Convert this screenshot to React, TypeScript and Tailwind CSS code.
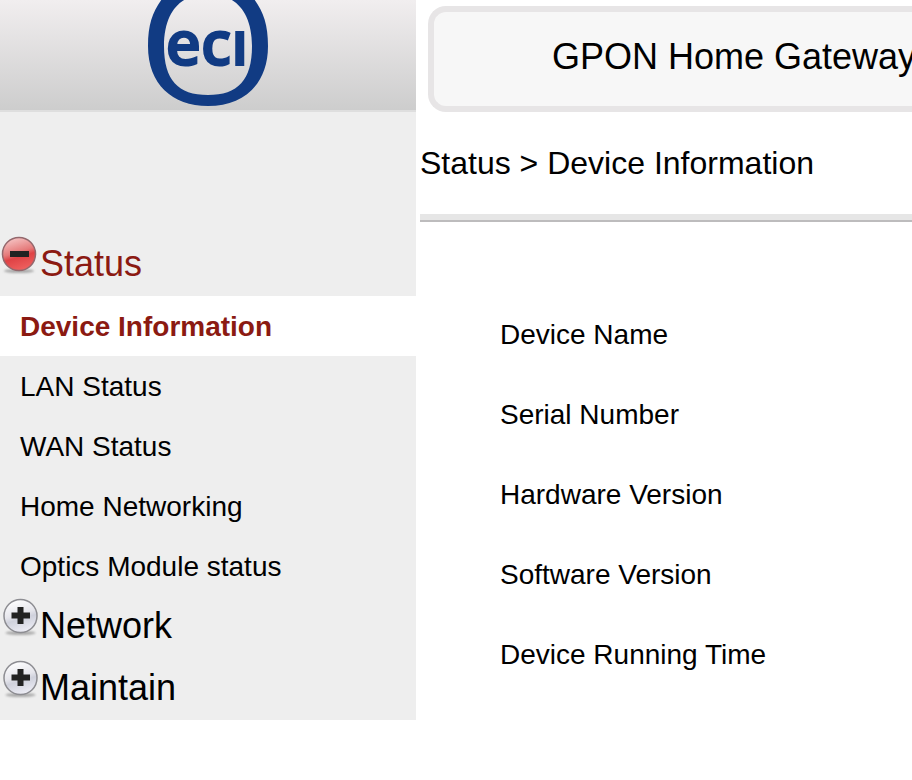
import React from "react";
import { twMerge } from "tailwind-merge";

const statusItems = [
  "Device Information",
  "LAN Status",
  "WAN Status",
  "Home Networking",
  "Optics Module status",
];

const deviceRows = [
  "Device Name",
  "Serial Number",
  "Hardware Version",
  "Software Version",
  "Device Running Time",
];

const Logo: React.FC = () => (
  <svg width="120" height="106" viewBox="0 0 120 106" role="img" aria-label="eci" className="shrink-0">
    <path
      fillRule="evenodd"
      fill="#113b83"
      d="M0 46C0 22 6 8 18 -6H102C114 8 120 22 120 46C120 84 96 106 60 106C24 106 0 84 0 46ZM16 46C16 80 30 95 60 95C90 95 104 80 104 46C104 20 94 4 80 -2H40C26 4 16 20 16 46Z"
    />
    <text
      x="59"
      y="65"
      textAnchor="middle"
      fill="#113b83"
      stroke="#113b83"
      strokeWidth="2"
      fontSize="61"
      fontWeight="600"
      fontFamily="Open Sans, Noto Sans, sans-serif"
    >
      ecı
    </text>
  </svg>
);

interface BallIconProps {
  open?: boolean;
}

const BallIcon: React.FC<BallIconProps> = ({ open }) => {
  const id = open ? "ball-open" : "ball-closed";
  const cx = open ? 19 : 20.5;

  return (
    <svg width="40" height="40" viewBox="0 0 40 40" aria-hidden="true" className="shrink-0">
      <defs>
        <linearGradient id={id} x1="0.3" y1="0" x2="0.6" y2="1">
          <stop offset="0" stopColor={open ? "#f6c6c6" : "#ffffff"} />
          <stop offset="0.45" stopColor={open ? "#e57a7a" : "#e6e6ec"} />
          <stop offset="0.6" stopColor={open ? "#df4245" : "#cfd1dc"} />
          <stop offset="1" stopColor={open ? "#ef6260" : "#eeeef6"} />
        </linearGradient>
        <filter id={`${id}-shadow`} x="-20%" y="-100%" width="140%" height="300%">
          <feGaussianBlur stdDeviation="1" />
        </filter>
      </defs>
      <ellipse cx={cx} cy="35" rx="15" ry="2" fill="#aaa" filter={`url(#${id}-shadow)`} />
      <circle cx={cx} cy="18" r="16.5" fill={`url(#${id})`} stroke={open ? "#94686d" : "#8d8d92"} strokeWidth="1.5" />
      <path
        d={open ? "M10 15h19v6H10z" : "M17.5 9h6v5.5h6.5v6h-6.5v5.5h-6v-5.5H11.5v-6h6z"}
        fill="#222"
      />
    </svg>
  );
};

interface MenuGroupProps {
  label: string;
  open?: boolean;
}

const MenuGroup: React.FC<MenuGroupProps> = ({ label, open }) => (
  <button
    type="button"
    aria-expanded={!!open}
    className={twMerge(
      "flex h-[62px] w-full items-start pt-0.5 text-left text-4xl text-black",
      open && "text-[#8b1a12]"
    )}
  >
    <BallIcon open={open} />
    <span className="pt-2">{label}</span>
  </button>
);

const Sidebar: React.FC = () => (
  <aside className="w-[416px] shrink-0 self-start bg-[#eee]">
    <div className="flex justify-center border-b-2 border-[#dedede] bg-linear-to-b from-[#f1eeef] to-[#cdcdcd] pb-1">
      <Logo />
    </div>
    <nav className="pt-[122px]">
      <MenuGroup label="Status" open />
      <ul>
        {statusItems.map((item, i) => (
          <li key={item}>
            <a
              href="#"
              className={twMerge(
                "block pl-5 pt-0.5 text-[28px] leading-[58px] text-black",
                i === 0 && "bg-white font-bold text-[#8b1a12]"
              )}
            >
              {item}
            </a>
          </li>
        ))}
      </ul>
      <MenuGroup label="Network" />
      <MenuGroup label="Maintain" />
    </nav>
  </aside>
);

const App: React.FC = () => {
  return (
    <div className="flex min-h-screen overflow-hidden bg-white font-['Liberation_Sans',Arial,sans-serif] text-black">
      <Sidebar />
      <div className="min-w-0 flex-1">
        <header className="mt-1.5 ml-3 rounded-l-[18px] border-6 border-r-0 border-[#e7e5e6] bg-[#f7f7f7] pl-[118px]">
          <h1 className="whitespace-nowrap pb-1 text-4xl leading-[90px]">GPON Home Gateway</h1>
        </header>
        <main className="pl-1">
          <h2 className="border-b-2 border-[#bdbcbd] text-[32px] leading-[102px]">
            <span className="block border-b-6 border-[#e6e6e6]">Status &gt; Device Information</span>
          </h2>
          <table className="mt-[73px] ml-20 text-left text-[28px]">
            <tbody>
              {deviceRows.map((row) => (
                <tr key={row} className="h-20">
                  <th scope="row" className="p-0 font-normal whitespace-nowrap">
                    {row}
                  </th>
                </tr>
              ))}
            </tbody>
          </table>
        </main>
      </div>
    </div>
  );
};

export default App;
